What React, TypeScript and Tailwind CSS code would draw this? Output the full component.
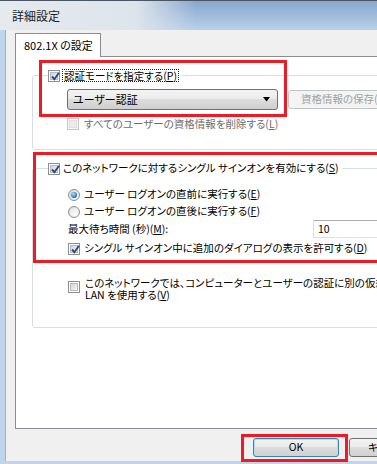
import type { ReactNode } from "react";

interface BoxProps {
  checked?: boolean;
  disabled?: boolean;
}

function CheckBox({ checked, disabled }: BoxProps) {
  return (
    <span
      className={`relative flex h-[12px] w-[12px] shrink-0 items-center justify-center border ${
        disabled ? "border-[#c6c6c6] bg-[#f7f7f7]" : "border-[#8e8f8f] bg-white"
      }`}
    >
      <span
        className={`h-[8px] w-[8px] border ${
          disabled
            ? "border-[#dedede] bg-[#ececec]"
            : "border-[#b9bcc0] bg-[linear-gradient(135deg,#cfd3d8,#f7f7f7)]"
        }`}
      />
      {checked ? (
        <svg className="absolute left-[1px] top-[0px]" width="11" height="11" viewBox="0 0 11 11">
          <path d="M2 5.5 L4.4 8.2 L9 1.8" fill="none" stroke="#2b4a86" strokeWidth="1.9" />
        </svg>
      ) : null}
    </span>
  );
}

function Radio({ checked }: { checked?: boolean }) {
  return (
    <span className="flex h-[12px] w-[12px] shrink-0 items-center justify-center rounded-full border border-[#8e8f8f] bg-[linear-gradient(135deg,#d6d9dd,#fafafa)]">
      {checked ? (
        <span className="h-[6px] w-[6px] rounded-full bg-[radial-gradient(circle_at_40%_35%,#b4e3ff,#2f86d0_55%,#134d8c)]" />
      ) : (
        <span className="h-[8px] w-[8px] rounded-full bg-[linear-gradient(135deg,#e3e5e8,#ffffff)]" />
      )}
    </span>
  );
}

function Key({ children }: { children: ReactNode }) {
  return <span className="underline underline-offset-[1px]">{children}</span>;
}

function WinButton({ children, focused }: { children: ReactNode; focused?: boolean }) {
  return (
    <button
      type="button"
      className={`flex h-[19px] w-[86px] shrink-0 items-center justify-center rounded-[3px] border bg-[linear-gradient(#f3f3f3,#ebebeb_45%,#dddddd_50%,#d0d0d0)] text-[10.5px] leading-none text-black ${
        focused ? "border-[#3c7fb1] shadow-[inset_0_0_0_1px_#a7e2fa]" : "border-[#707070]"
      }`}
    >
      {children}
    </button>
  );
}

export default function App() {
  return (
    <div className="relative h-[464px] w-[377px] overflow-hidden bg-[#c0d5eb] font-['Noto_Sans_CJK_JP','Noto_Sans',sans-serif] text-[10.5px] text-black [font-feature-settings:'palt']">
      <div className="flex h-[30px] items-center border-t border-[#4a5663] bg-[linear-gradient(to_right,#e6eaef_0%,#dde4eb_36%,rgba(221,228,235,0)_52%),linear-gradient(to_bottom,#87a7cc,#b9d0e8)] pl-[12px]">
        <span className="text-[12px] leading-none text-[#1b1b1b]">詳細設定</span>
      </div>

      <div className="ml-[5px] h-[431px] overflow-hidden border-l border-[#9fb3c8] bg-[#f0f0f0] pl-[9px] pt-[3px]">
        <div className="relative z-10 -mb-[1px] flex h-[24px] w-[86px] items-center border border-b-0 border-[#898c95] bg-white pl-[8px] text-[11px] leading-none">
          802.1X の設定
        </div>

        <div className="h-[373px] w-[380px] border border-r-0 border-[#898c95] bg-white">
          <div className="relative ml-[16px] mt-[18px] h-[75px] w-[360px] rounded-[3px] border border-[#d5dfe5] pl-[34px] pt-[13px]">
            <div className="absolute left-[15px] top-[-7px] flex h-[13px] items-center gap-[2px] bg-white pr-[2px]">
              <CheckBox checked />
              <span className="border border-dotted border-[#222] px-[1px] leading-[11px]">
                認証モードを指定する(<Key>P</Key>)
              </span>
            </div>
            <div className="flex items-center gap-[10px]">
              <div className="flex h-[21px] w-[211px] shrink-0 items-center justify-between rounded-[3px] border border-[#707070] bg-[linear-gradient(#f3f3f3,#ebebeb_45%,#dddddd_50%,#cfcfcf)] pl-[5px] pr-[6px] text-[11px] leading-none">
                <span>ユーザー認証</span>
                <svg width="8" height="5" viewBox="0 0 8 5">
                  <path d="M0 0 H7 L3.5 4.5 Z" fill="#000" />
                </svg>
              </div>
              <div className="flex h-[19px] w-[110px] shrink-0 items-center rounded-[3px] border border-[#c2c5c8] bg-[#f4f4f4] pl-[12px] leading-none text-[#a0a0a0]">
                資格情報の保存(<Key>C</Key>)
              </div>
            </div>
            <div className="mt-[8px] flex h-[12px] items-center gap-[5px] leading-none text-[#6d6d6d]">
              <CheckBox disabled />
              <span>
                すべてのユーザーの資格情報を削除する(<Key>L</Key>)
              </span>
            </div>
          </div>

          <div className="relative ml-[16px] mt-[18px] h-[160px] w-[360px] rounded-[3px] border border-[#d5dfe5] pl-[35px] pt-[17px]">
            <div className="absolute left-[15px] top-[-7px] flex h-[13px] items-center gap-[3px] bg-white pr-[3px]">
              <CheckBox checked />
              <span className="leading-none">
                このネットワークに対するシングル サインオンを有効にする(<Key>S</Key>)
              </span>
            </div>
            <div className="flex h-[17px] items-center gap-[4px] leading-none">
              <Radio checked />
              <span>
                ユーザー ログオンの直前に実行する(<Key>E</Key>)
              </span>
            </div>
            <div className="flex h-[17px] items-center gap-[4px] leading-none">
              <Radio />
              <span>
                ユーザー ログオンの直後に実行する(<Key>F</Key>)
              </span>
            </div>
            <div className="flex h-[18px] items-center leading-none">
              <span className="w-[245px] shrink-0">
                最大待ち時間 (秒)(<Key>M</Key>):
              </span>
              <div className="flex h-[18px] w-[80px] shrink-0 items-center border border-[#dbdfe6] border-t-[#abadb3] bg-white pl-[4px]">
                10
              </div>
            </div>
            <div className="mt-[2px] flex h-[17px] items-center gap-[4px] leading-none">
              <CheckBox checked />
              <span className="whitespace-nowrap">
                シングル サインオン中に追加のダイアログの表示を許可する(<Key>D</Key>)
              </span>
            </div>
            <div className="mt-[20px] flex items-start gap-[5px]">
              <span className="mt-[4px]">
                <CheckBox />
              </span>
              <span className="whitespace-nowrap leading-[12px]">
                このネットワークでは、コンピューターとユーザーの認証に別の仮想
                <br />
                LAN を使用する(<Key>V</Key>)
              </span>
            </div>
          </div>
        </div>

        <div className="ml-[238px] mt-[9px] flex gap-[10px]">
          <WinButton focused>OK</WinButton>
          <WinButton>キャンセル</WinButton>
        </div>
      </div>

      <div className="pointer-events-none absolute left-[39px] top-[60px] h-[57px] w-[248px] border-[3px] border-[#ed1c24]" />
      <div className="pointer-events-none absolute left-[33px] top-[152px] h-[111px] w-[360px] border-[3px] border-[#ed1c24]" />
      <div className="pointer-events-none absolute left-[241px] top-[434px] h-[28px] w-[107px] border-[3px] border-[#ed1c24]" />
    </div>
  );
}
